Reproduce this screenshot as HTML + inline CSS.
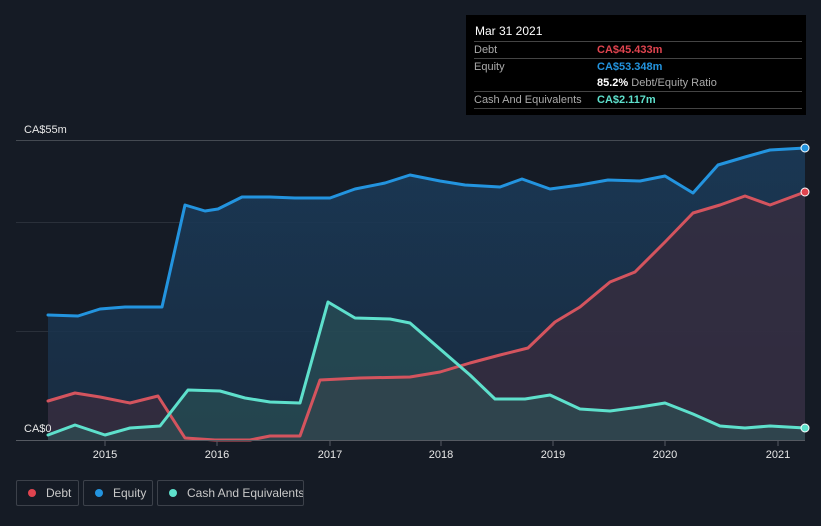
<!DOCTYPE html>
<html><head><meta charset="utf-8"><style>
html,body{margin:0;width:821px;height:526px;overflow:hidden}
body{background:#151b25;font-family:"Liberation Sans",sans-serif;position:relative}
.tt{position:absolute;left:466px;top:15px;width:340px;height:100px;background:#000;color:#fff;font-size:11px}
.row{position:absolute;left:8px;width:328px;border-top:1px solid #444;height:17px;line-height:16px}
.lg{position:absolute;top:480px;height:26px;border:1px solid #3c414a;border-radius:2px;color:#c8c8c8;font-size:12px;line-height:24px;box-sizing:border-box;white-space:nowrap;overflow:hidden}
.dot{display:inline-block;width:8px;height:8px;border-radius:50%;margin:0 10px 0 11px;vertical-align:0}
</style></head><body>
<svg width="821" height="526" style="position:absolute;left:0;top:0">
<defs>
<linearGradient id="ge" x1="0" y1="0" x2="0" y2="1"><stop offset="0" stop-color="#1a3a58" stop-opacity=".9"/><stop offset="1" stop-color="#1a3048" stop-opacity=".8"/></linearGradient>
</defs>
<g stroke="#2a303a" stroke-width="1"><line x1="16" y1="140.5" x2="805" y2="140.5" stroke="#444a52"/><line x1="16" y1="222.5" x2="805" y2="222.5"/><line x1="16" y1="331.5" x2="805" y2="331.5"/></g>
<polygon fill="url(#ge)" points="48,440 48,315 78,316 100,309 125,307 162,307 185,205 205,211 218,209 242,197 270,197 295,198 330,198 355,189 385,183 410,175 440,181 465,185 500,187 522,179 550,189 580,185 608,180 640,181 665,176 693,193 718,165 745,157 770,150 805,148 805,440"/>
<polygon fill="#3a2c3e" fill-opacity=".75" points="48,440 48,401 75,393 100,397 130,403 158,396 185,438 215,440 250,440 270,436 300,436 320,380 360,378 410,377 440,372 470,363 500,355 528,348 555,322 580,307 610,282 635,272 665,242 693,213 720,205 745,196 770,205 805,192 805,440"/>
<polygon fill="#2d5a5a" fill-opacity=".55" points="48,440 48,435 75,425 105,435 130,428 160,426 188,390 220,391 245,398 270,402 300,403 328,302 355,318 390,319 410,323 440,349 470,375 495,399 525,399 550,395 580,409 610,411 640,407 665,403 693,414 720,426 745,428 770,426 805,428 805,440"/>
<g fill="none" stroke-width="3" stroke-linejoin="round" stroke-linecap="round">
<polyline stroke="#2394df" points="48,315 78,316 100,309 125,307 162,307 185,205 205,211 218,209 242,197 270,197 295,198 330,198 355,189 385,183 410,175 440,181 465,185 500,187 522,179 550,189 580,185 608,180 640,181 665,176 693,193 718,165 745,157 770,150 805,148"/>
<polyline stroke="#d4545e" points="48,401 75,393 100,397 130,403 158,396 185,438 215,440 250,440 270,436 300,436 320,380 360,378 410,377 440,372 470,363 500,355 528,348 555,322 580,307 610,282 635,272 665,242 693,213 720,205 745,196 770,205 805,192"/>
<polyline stroke="#5ee0cc" points="48,435 75,425 105,435 130,428 160,426 188,390 220,391 245,398 270,402 300,403 328,302 355,318 390,319 410,323 440,349 470,375 495,399 525,399 550,395 580,409 610,411 640,407 665,403 693,414 720,426 745,428 770,426 805,428"/>
</g>
<line x1="16" y1="440.5" x2="805" y2="440.5" stroke="#555a62"/>
<g stroke="#555a62"><line x1="105" y1="441" x2="105" y2="446"/><line x1="217" y1="441" x2="217" y2="446"/><line x1="330" y1="441" x2="330" y2="446"/><line x1="441" y1="441" x2="441" y2="446"/><line x1="553" y1="441" x2="553" y2="446"/><line x1="665" y1="441" x2="665" y2="446"/><line x1="778" y1="441" x2="778" y2="446"/></g>
<circle cx="805" cy="148" r="4" fill="#2394df" stroke="#fff" stroke-width="1"/>
<circle cx="805" cy="192" r="4" fill="#e0444f" stroke="#fff" stroke-width="1"/>
<circle cx="805" cy="428" r="4" fill="#5ee0cc" stroke="#fff" stroke-width="1"/>
<g fill="#e8e8e8" font-size="11" font-family="Liberation Sans,sans-serif">
<text x="24" y="133">CA$55m</text><text x="24" y="432">CA$0</text>
<g text-anchor="middle"><text x="105" y="458">2015</text><text x="217" y="458">2016</text><text x="330" y="458">2017</text><text x="441" y="458">2018</text><text x="553" y="458">2019</text><text x="665" y="458">2020</text><text x="778" y="458">2021</text></g>
</g>
</svg>
<div class="tt">
<div style="position:absolute;left:9px;top:9px;font-size:12px">Mar 31 2021</div>
<div class="row" style="top:26px"><span style="color:#aaa">Debt</span><span style="position:absolute;left:123px;color:#e0444f;font-weight:bold">CA$45.433m</span></div>
<div class="row" style="top:43px"><span style="color:#aaa">Equity</span><span style="position:absolute;left:123px;color:#2394df;font-weight:bold">CA$53.348m</span></div>
<div style="position:absolute;left:131px;top:60px;line-height:16px"><b>85.2%</b> <span style="color:#aaa">Debt/Equity Ratio</span></div>
<div class="row" style="top:76px"><span style="color:#aaa">Cash And Equivalents</span><span style="position:absolute;left:123px;color:#5ee0cc;font-weight:bold">CA$2.117m</span></div>
<div class="row" style="top:93px;height:0"></div>
</div>
<div class="lg" style="left:16px;width:63px"><span class="dot" style="background:#e0444f"></span>Debt</div>
<div class="lg" style="left:83px;width:70px"><span class="dot" style="background:#2394df"></span>Equity</div>
<div class="lg" style="left:157px;width:147px"><span class="dot" style="background:#5ee0cc"></span>Cash And Equivalents</div>
</body></html>
